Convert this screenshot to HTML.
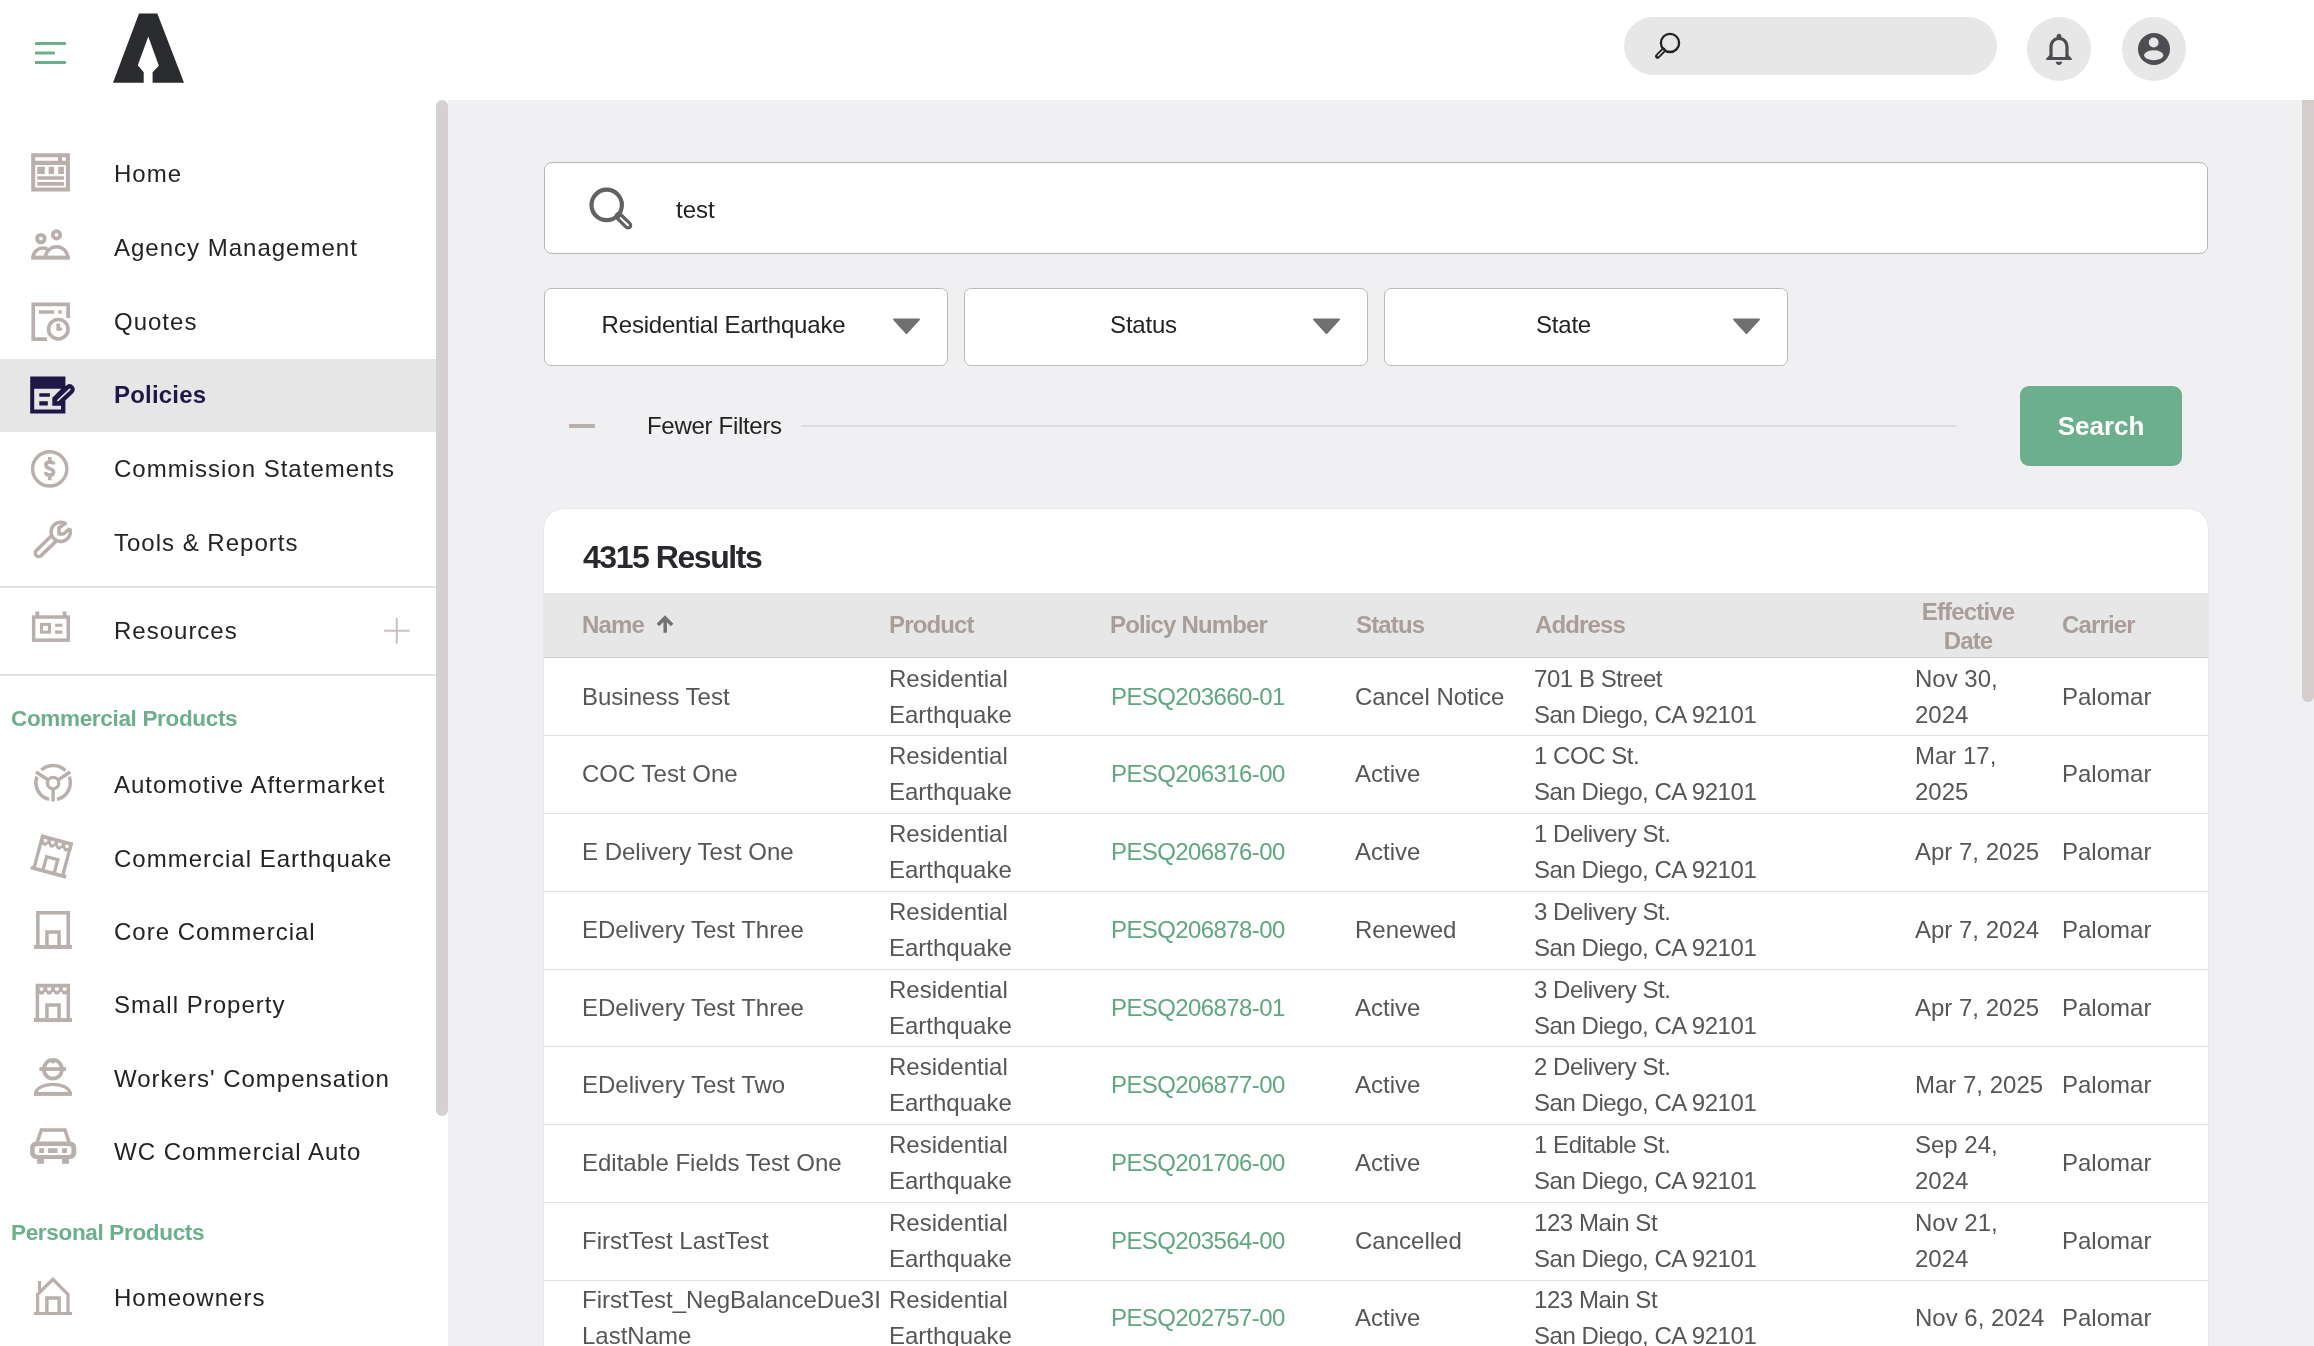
<!DOCTYPE html><html><head><meta charset="utf-8"><style>
*{box-sizing:border-box;margin:0;padding:0}
html,body{width:2314px;height:1346px;overflow:hidden;background:#fff;font-family:"Liberation Sans",sans-serif}
.t{position:absolute;white-space:nowrap;will-change:transform}
.b{position:absolute}
svg{position:absolute;left:0;top:0;overflow:visible}
</style></head><body><div class="b" style="left:448px;top:100px;width:1866px;height:1246px;background:#f0f0f3"></div><div class="b" style="left:0;top:358.8px;width:436px;height:72.8px;background:#e6e6e6"></div><div class="b" style="left:0;top:585.7px;width:436px;height:2px;background:#e3e3e7"></div><div class="b" style="left:0;top:673.8px;width:436px;height:2px;background:#e3e3e7"></div><div class="b" style="left:436px;top:100px;width:12px;height:1015.7px;border-radius:6px;background:#d6d1d0"></div><div class="b" style="left:2302px;top:100px;width:12px;height:601.7px;border-radius:0 0 6px 6px;background:#d3cdcc"></div><div class="b" style="left:1624px;top:17px;width:373px;height:58px;border-radius:29px;background:#e7e7e7"></div><div class="b" style="left:2027px;top:17px;width:64px;height:64px;border-radius:50%;background:#e7e7e7"></div><div class="b" style="left:2122px;top:17px;width:64px;height:64px;border-radius:50%;background:#e7e7e7"></div><div class="t" style="left:113.5px;top:156.38px;font-size:24px;line-height:36px;font-weight:400;color:#222326;letter-spacing:1px;">Home</div><div class="t" style="left:113.5px;top:229.68px;font-size:24px;line-height:36px;font-weight:400;color:#222326;letter-spacing:1px;">Agency Management</div><div class="t" style="left:113.5px;top:304.08px;font-size:24px;line-height:36px;font-weight:400;color:#222326;letter-spacing:1px;">Quotes</div><div class="t" style="left:113.5px;top:451.28px;font-size:24px;line-height:36px;font-weight:400;color:#222326;letter-spacing:1px;">Commission Statements</div><div class="t" style="left:113.5px;top:524.98px;font-size:24px;line-height:36px;font-weight:400;color:#222326;letter-spacing:1px;">Tools &amp; Reports</div><div class="t" style="left:113.5px;top:612.88px;font-size:24px;line-height:36px;font-weight:400;color:#222326;letter-spacing:1px;">Resources</div><div class="t" style="left:113.5px;top:766.68px;font-size:24px;line-height:36px;font-weight:400;color:#222326;letter-spacing:1px;">Automotive Aftermarket</div><div class="t" style="left:113.5px;top:840.58px;font-size:24px;line-height:36px;font-weight:400;color:#222326;letter-spacing:1px;">Commercial Earthquake</div><div class="t" style="left:113.5px;top:913.58px;font-size:24px;line-height:36px;font-weight:400;color:#222326;letter-spacing:1px;">Core Commercial</div><div class="t" style="left:113.5px;top:987.28px;font-size:24px;line-height:36px;font-weight:400;color:#222326;letter-spacing:1px;">Small Property</div><div class="t" style="left:113.5px;top:1061.38px;font-size:24px;line-height:36px;font-weight:400;color:#222326;letter-spacing:1px;">Workers' Compensation</div><div class="t" style="left:113.5px;top:1134.48px;font-size:24px;line-height:36px;font-weight:400;color:#222326;letter-spacing:1px;">WC Commercial Auto</div><div class="t" style="left:113.5px;top:1280.48px;font-size:24px;line-height:36px;font-weight:400;color:#222326;letter-spacing:1px;">Homeowners</div><div class="t" style="left:113.5px;top:377.28px;font-size:24px;line-height:36px;font-weight:700;color:#1f1746;letter-spacing:0.2px;">Policies</div><div class="t" style="left:11px;top:701.80px;font-size:22.5px;line-height:34px;font-weight:700;color:#6caf8c;letter-spacing:-0.33px;">Commercial Products</div><div class="t" style="left:11px;top:1215.50px;font-size:22.5px;line-height:34px;font-weight:700;color:#6caf8c;letter-spacing:-0.33px;">Personal Products</div><div class="b" style="left:544px;top:162px;width:1664px;height:92px;border:1.5px solid #bcb2b0;border-radius:8px;background:#fff"></div><div class="t" style="left:675.5px;top:191.58px;font-size:24px;line-height:36px;font-weight:400;color:#222;letter-spacing:0px;">test</div><div class="b" style="left:544px;top:288px;width:404px;height:78px;border:1.5px solid #c3b9b7;border-radius:7px;background:#fff"></div><div class="t" style="left:544px;top:306.7px;width:359px;text-align:center;font-size:24px;line-height:36px;color:#222;letter-spacing:-0.2px">Residential Earthquake</div><div class="b" style="left:964px;top:288px;width:404px;height:78px;border:1.5px solid #c3b9b7;border-radius:7px;background:#fff"></div><div class="t" style="left:964px;top:306.7px;width:359px;text-align:center;font-size:24px;line-height:36px;color:#222;letter-spacing:-0.2px">Status</div><div class="b" style="left:1384px;top:288px;width:404px;height:78px;border:1.5px solid #c3b9b7;border-radius:7px;background:#fff"></div><div class="t" style="left:1384px;top:306.7px;width:359px;text-align:center;font-size:24px;line-height:36px;color:#222;letter-spacing:-0.2px">State</div><div class="b" style="left:569px;top:423.5px;width:26px;height:4.2px;background:#b8aeac;border-radius:1px"></div><div class="t" style="left:647px;top:407.68px;font-size:24px;line-height:36px;font-weight:400;color:#222;letter-spacing:-0.3px;">Fewer Filters</div><div class="b" style="left:800.5px;top:424.6px;width:1155.5px;height:2px;background:#dcdce0"></div><div class="b" style="left:2020px;top:386px;width:162px;height:80px;border-radius:9px;background:#6caf8c"></div><div class="t" style="left:2020px;top:406.6px;width:162px;text-align:center;font-size:26px;line-height:39px;font-weight:700;color:#fff;letter-spacing:0px">Search</div><div class="b" style="left:544px;top:509px;width:1664px;height:900px;border-radius:20px;background:#fff;box-shadow:0 0 2px rgba(0,0,0,0.10)"></div><div class="t" style="left:582.5px;top:533.01px;font-size:32px;line-height:48px;font-weight:700;color:#28292c;letter-spacing:-1.45px;">4315 Results</div><div class="b" style="left:544px;top:593px;width:1664px;height:65px;background:#e7e7e7;border-bottom:1px solid #cbcbcb"></div><div class="t" style="left:581.5px;top:607.28px;font-size:24px;line-height:36px;font-weight:700;color:#a99d9a;letter-spacing:-0.85px;">Name</div><div class="t" style="left:889px;top:607.28px;font-size:24px;line-height:36px;font-weight:700;color:#a99d9a;letter-spacing:-0.85px;">Product</div><div class="t" style="left:1109.5px;top:607.28px;font-size:24px;line-height:36px;font-weight:700;color:#a99d9a;letter-spacing:-0.85px;">Policy Number</div><div class="t" style="left:1355.5px;top:607.28px;font-size:24px;line-height:36px;font-weight:700;color:#a99d9a;letter-spacing:-0.85px;">Status</div><div class="t" style="left:1534.5px;top:607.28px;font-size:24px;line-height:36px;font-weight:700;color:#a99d9a;letter-spacing:-0.85px;">Address</div><div class="t" style="left:2062px;top:607.28px;font-size:24px;line-height:36px;font-weight:700;color:#a99d9a;letter-spacing:-0.85px;">Carrier</div><div class="t" style="left:1900px;top:597px;width:136px;text-align:center;font-size:24px;line-height:29px;font-weight:700;color:#a99d9a;letter-spacing:-0.85px">Effective<br>Date</div><div class="t" style="left:582px;top:678.55px;font-size:24px;line-height:36px;color:#545658;letter-spacing:0px">Business Test</div><div class="t" style="left:889px;top:660.55px;font-size:24px;line-height:36px;color:#545658;letter-spacing:0px">Residential<br>Earthquake</div><div class="t" style="left:1110.6px;top:678.55px;font-size:24px;line-height:36px;color:#5fa77f;letter-spacing:-0.6px">PESQ203660-01</div><div class="t" style="left:1355.3px;top:678.55px;font-size:24px;line-height:36px;color:#545658;letter-spacing:0px">Cancel Notice</div><div class="t" style="left:1534.3px;top:660.55px;font-size:24px;line-height:36px;color:#545658;letter-spacing:-0.45px">701 B Street<br>San Diego, CA 92101</div><div class="t" style="left:1915.2px;top:660.55px;font-size:24px;line-height:36px;color:#545658;letter-spacing:0px">Nov 30,<br>2024</div><div class="t" style="left:2061.8px;top:678.55px;font-size:24px;line-height:36px;color:#545658;letter-spacing:0px">Palomar</div><div class="b" style="left:544px;top:735.00px;width:1664px;height:1px;background:#e0e0e0"></div><div class="t" style="left:582px;top:756.29px;font-size:24px;line-height:36px;color:#545658;letter-spacing:0px">COC Test One</div><div class="t" style="left:889px;top:738.29px;font-size:24px;line-height:36px;color:#545658;letter-spacing:0px">Residential<br>Earthquake</div><div class="t" style="left:1110.6px;top:756.29px;font-size:24px;line-height:36px;color:#5fa77f;letter-spacing:-0.6px">PESQ206316-00</div><div class="t" style="left:1355.3px;top:756.29px;font-size:24px;line-height:36px;color:#545658;letter-spacing:0px">Active</div><div class="t" style="left:1534.3px;top:738.29px;font-size:24px;line-height:36px;color:#545658;letter-spacing:-0.45px">1 COC St.<br>San Diego, CA 92101</div><div class="t" style="left:1915.2px;top:738.29px;font-size:24px;line-height:36px;color:#545658;letter-spacing:0px">Mar 17,<br>2025</div><div class="t" style="left:2061.8px;top:756.29px;font-size:24px;line-height:36px;color:#545658;letter-spacing:0px">Palomar</div><div class="b" style="left:544px;top:812.84px;width:1664px;height:1px;background:#e0e0e0"></div><div class="t" style="left:582px;top:834.03px;font-size:24px;line-height:36px;color:#545658;letter-spacing:0px">E Delivery Test One</div><div class="t" style="left:889px;top:816.03px;font-size:24px;line-height:36px;color:#545658;letter-spacing:0px">Residential<br>Earthquake</div><div class="t" style="left:1110.6px;top:834.03px;font-size:24px;line-height:36px;color:#5fa77f;letter-spacing:-0.6px">PESQ206876-00</div><div class="t" style="left:1355.3px;top:834.03px;font-size:24px;line-height:36px;color:#545658;letter-spacing:0px">Active</div><div class="t" style="left:1534.3px;top:816.03px;font-size:24px;line-height:36px;color:#545658;letter-spacing:-0.45px">1 Delivery St.<br>San Diego, CA 92101</div><div class="t" style="left:1915.2px;top:834.03px;font-size:24px;line-height:36px;color:#545658;letter-spacing:0px">Apr 7, 2025</div><div class="t" style="left:2061.8px;top:834.03px;font-size:24px;line-height:36px;color:#545658;letter-spacing:0px">Palomar</div><div class="b" style="left:544px;top:890.68px;width:1664px;height:1px;background:#e0e0e0"></div><div class="t" style="left:582px;top:911.77px;font-size:24px;line-height:36px;color:#545658;letter-spacing:0px">EDelivery Test Three</div><div class="t" style="left:889px;top:893.77px;font-size:24px;line-height:36px;color:#545658;letter-spacing:0px">Residential<br>Earthquake</div><div class="t" style="left:1110.6px;top:911.77px;font-size:24px;line-height:36px;color:#5fa77f;letter-spacing:-0.6px">PESQ206878-00</div><div class="t" style="left:1355.3px;top:911.77px;font-size:24px;line-height:36px;color:#545658;letter-spacing:0px">Renewed</div><div class="t" style="left:1534.3px;top:893.77px;font-size:24px;line-height:36px;color:#545658;letter-spacing:-0.45px">3 Delivery St.<br>San Diego, CA 92101</div><div class="t" style="left:1915.2px;top:911.77px;font-size:24px;line-height:36px;color:#545658;letter-spacing:0px">Apr 7, 2024</div><div class="t" style="left:2061.8px;top:911.77px;font-size:24px;line-height:36px;color:#545658;letter-spacing:0px">Palomar</div><div class="b" style="left:544px;top:968.52px;width:1664px;height:1px;background:#e0e0e0"></div><div class="t" style="left:582px;top:989.51px;font-size:24px;line-height:36px;color:#545658;letter-spacing:0px">EDelivery Test Three</div><div class="t" style="left:889px;top:971.51px;font-size:24px;line-height:36px;color:#545658;letter-spacing:0px">Residential<br>Earthquake</div><div class="t" style="left:1110.6px;top:989.51px;font-size:24px;line-height:36px;color:#5fa77f;letter-spacing:-0.6px">PESQ206878-01</div><div class="t" style="left:1355.3px;top:989.51px;font-size:24px;line-height:36px;color:#545658;letter-spacing:0px">Active</div><div class="t" style="left:1534.3px;top:971.51px;font-size:24px;line-height:36px;color:#545658;letter-spacing:-0.45px">3 Delivery St.<br>San Diego, CA 92101</div><div class="t" style="left:1915.2px;top:989.51px;font-size:24px;line-height:36px;color:#545658;letter-spacing:0px">Apr 7, 2025</div><div class="t" style="left:2061.8px;top:989.51px;font-size:24px;line-height:36px;color:#545658;letter-spacing:0px">Palomar</div><div class="b" style="left:544px;top:1046.36px;width:1664px;height:1px;background:#e0e0e0"></div><div class="t" style="left:582px;top:1067.25px;font-size:24px;line-height:36px;color:#545658;letter-spacing:0px">EDelivery Test Two</div><div class="t" style="left:889px;top:1049.25px;font-size:24px;line-height:36px;color:#545658;letter-spacing:0px">Residential<br>Earthquake</div><div class="t" style="left:1110.6px;top:1067.25px;font-size:24px;line-height:36px;color:#5fa77f;letter-spacing:-0.6px">PESQ206877-00</div><div class="t" style="left:1355.3px;top:1067.25px;font-size:24px;line-height:36px;color:#545658;letter-spacing:0px">Active</div><div class="t" style="left:1534.3px;top:1049.25px;font-size:24px;line-height:36px;color:#545658;letter-spacing:-0.45px">2 Delivery St.<br>San Diego, CA 92101</div><div class="t" style="left:1915.2px;top:1067.25px;font-size:24px;line-height:36px;color:#545658;letter-spacing:0px">Mar 7, 2025</div><div class="t" style="left:2061.8px;top:1067.25px;font-size:24px;line-height:36px;color:#545658;letter-spacing:0px">Palomar</div><div class="b" style="left:544px;top:1124.20px;width:1664px;height:1px;background:#e0e0e0"></div><div class="t" style="left:582px;top:1144.99px;font-size:24px;line-height:36px;color:#545658;letter-spacing:0px">Editable Fields Test One</div><div class="t" style="left:889px;top:1126.99px;font-size:24px;line-height:36px;color:#545658;letter-spacing:0px">Residential<br>Earthquake</div><div class="t" style="left:1110.6px;top:1144.99px;font-size:24px;line-height:36px;color:#5fa77f;letter-spacing:-0.6px">PESQ201706-00</div><div class="t" style="left:1355.3px;top:1144.99px;font-size:24px;line-height:36px;color:#545658;letter-spacing:0px">Active</div><div class="t" style="left:1534.3px;top:1126.99px;font-size:24px;line-height:36px;color:#545658;letter-spacing:-0.45px">1 Editable St.<br>San Diego, CA 92101</div><div class="t" style="left:1915.2px;top:1126.99px;font-size:24px;line-height:36px;color:#545658;letter-spacing:0px">Sep 24,<br>2024</div><div class="t" style="left:2061.8px;top:1144.99px;font-size:24px;line-height:36px;color:#545658;letter-spacing:0px">Palomar</div><div class="b" style="left:544px;top:1202.04px;width:1664px;height:1px;background:#e0e0e0"></div><div class="t" style="left:582px;top:1222.73px;font-size:24px;line-height:36px;color:#545658;letter-spacing:0px">FirstTest LastTest</div><div class="t" style="left:889px;top:1204.73px;font-size:24px;line-height:36px;color:#545658;letter-spacing:0px">Residential<br>Earthquake</div><div class="t" style="left:1110.6px;top:1222.73px;font-size:24px;line-height:36px;color:#5fa77f;letter-spacing:-0.6px">PESQ203564-00</div><div class="t" style="left:1355.3px;top:1222.73px;font-size:24px;line-height:36px;color:#545658;letter-spacing:0px">Cancelled</div><div class="t" style="left:1534.3px;top:1204.73px;font-size:24px;line-height:36px;color:#545658;letter-spacing:-0.45px">123 Main St<br>San Diego, CA 92101</div><div class="t" style="left:1915.2px;top:1204.73px;font-size:24px;line-height:36px;color:#545658;letter-spacing:0px">Nov 21,<br>2024</div><div class="t" style="left:2061.8px;top:1222.73px;font-size:24px;line-height:36px;color:#545658;letter-spacing:0px">Palomar</div><div class="b" style="left:544px;top:1279.88px;width:1664px;height:1px;background:#e0e0e0"></div><div class="t" style="left:582px;top:1282.47px;font-size:24px;line-height:36px;color:#545658;letter-spacing:0px">FirstTest_NegBalanceDue3I<br>LastName</div><div class="t" style="left:889px;top:1282.47px;font-size:24px;line-height:36px;color:#545658;letter-spacing:0px">Residential<br>Earthquake</div><div class="t" style="left:1110.6px;top:1300.47px;font-size:24px;line-height:36px;color:#5fa77f;letter-spacing:-0.6px">PESQ202757-00</div><div class="t" style="left:1355.3px;top:1300.47px;font-size:24px;line-height:36px;color:#545658;letter-spacing:0px">Active</div><div class="t" style="left:1534.3px;top:1282.47px;font-size:24px;line-height:36px;color:#545658;letter-spacing:-0.45px">123 Main St<br>San Diego, CA 92101</div><div class="t" style="left:1915.2px;top:1300.47px;font-size:24px;line-height:36px;color:#545658;letter-spacing:0px">Nov 6, 2024</div><div class="t" style="left:2061.8px;top:1300.47px;font-size:24px;line-height:36px;color:#545658;letter-spacing:0px">Palomar</div><svg width="2314" height="1346" viewBox="0 0 2314 1346"><path fill="#6caf8c" d="M35 42H64.8A1.5 1.5 0 0 1 64.8 45H35Z M35 51.6H53.6A1.5 1.5 0 0 1 53.6 54.6H35Z M35 61.1H64.8A1.5 1.5 0 0 1 64.8 64.1H35Z"/><path fill="#2a2b2e" d="M139 13.6H157.3L184 82.8H152.6V72.3L158.8 65.7L148.3 36.6L137.8 65.3L143.7 72.3V82.8H113Z"/><g fill="none" stroke="#222" stroke-width="2.3"><circle cx="1670" cy="42.9" r="9.1"/></g><path d="M1663.5 50.2L1657.5 56.2" stroke="#222" stroke-width="5" stroke-linecap="round"/><path d="M1663 50.7L1658 55.7" stroke="#e7e7e7" stroke-width="1.3" stroke-linecap="round"/><g transform="translate(2039.8,29.7) scale(1.6)"><path fill="#4d4e51" d="M12 22c1.1 0 2-.9 2-2h-4c0 1.1.89 2 2 2zm6-6v-5c0-3.07-1.64-5.64-4.5-6.32V4c0-.83-.67-1.5-1.5-1.5s-1.5.67-1.5 1.5v.68C7.63 5.36 6 7.92 6 11v5l-2 2v1h16v-1l-2-2zm-2 1H8v-6c0-2.48 1.51-4.5 4-4.5s4 2.02 4 4.5v6z"/></g><circle cx="2154" cy="49" r="16" fill="#4d4e51"/><circle cx="2153.7" cy="42.5" r="4.9" fill="#e7e7e7"/><ellipse cx="2153.7" cy="55.3" rx="9.6" ry="5" fill="#e7e7e7"/><path fill="#b9afac" fill-rule="evenodd" d="M31.2 153.3H69.9V191.5H31.2Z M35.2 157.2H58V160.8H35.2Z M62 157.2H65.9V160.8H62Z M35.2 165H65.9V187.5H35.2Z"/><path fill="#b9afac" d="M37.2 166.8h7.6v7.3h-7.6z M48.6 166.8h5.5v7.3h-5.5z M58.2 166.8h5.7v7.3h-5.7z M37.2 176.2h26.7v3.5h-26.7z M37.2 182.1h26.7v3.7h-26.7z"/><g fill="none" stroke="#b9afac"><circle cx="40.9" cy="238.6" r="3.75" stroke-width="3.9"/><circle cx="56.5" cy="234.9" r="3.7" stroke-width="3.8"/><path stroke-width="3.5" d="M33.1 258A9.8 9.8 0 0 1 47.5 249.3"/><path stroke-width="3.5" d="M45.25 258A11.3 11.3 0 0 1 67.85 258"/></g><rect x="31.2" y="255.6" width="38.6" height="4.1" fill="#b9afac"/><path fill="none" stroke="#b9afac" stroke-width="3.7" d="M47 339.15H33.25V304.35H68.15V318"/><path fill="#b9afac" d="M39 310.3h15.1v3.4h-15.1z M58.3 310.3h3.5v3.4h-3.5z M56.4 323.6h3.7v7.2h-3.7z M56.4 327.4h5.5v3.4h-5.5z"/><circle cx="58.3" cy="329.2" r="9.75" fill="none" stroke="#b9afac" stroke-width="3.6"/><path fill="#1f1746" fill-rule="evenodd" d="M30.2 376.6H65.4V385.9L66.6 385.2A5.1 5.1 0 0 1 73.2 392.9L65.4 400.6V413.5H30.2Z M34.2 388.7H61.3L52.3 397.8V405.7H61V409.4H34.2Z"/><path fill="#1f1746" d="M39.3 393.2h10.6v3.6h-10.6z M39.3 401.3h8.5v4.2h-8.5z"/><path d="M57.9 400.5L69.8 389.3" stroke="#e6e6e6" stroke-width="1.7" stroke-linecap="round"/><circle cx="49.7" cy="468.9" r="17.1" fill="none" stroke="#b9afac" stroke-width="3.4"/><path fill="none" stroke="#b9afac" stroke-width="3.6" d="M53.6 464.6C53.6 462.9 51.9 462.1 49.7 462.1C47.4 462.1 45.9 463.3 45.9 465.2C45.9 467.3 47.8 468 49.7 468.6C52 469.3 53.6 470.2 53.6 472.2C53.6 474.1 51.9 475.1 49.7 475.1C47.4 475.1 45.7 474 45.6 472.1M49.8 457V462.5M49.8 474.8V480.2"/><path fill="none" stroke="#b9afac" stroke-width="3.5" stroke-linejoin="round" d="M51.82 535.59L36.27 550.58A3.5 3.5 0 0 0 41.13 555.62L56.68 540.63"/><path fill="none" stroke="#b9afac" stroke-width="3.5" stroke-linejoin="round" d="M69.66 528.46A9.6 9.6 0 1 1 65.35 523.5L59 527.8V534H63.6L69.66 528.46"/><rect x="33.65" y="617.05" width="34.6" height="23.1" fill="none" stroke="#b9afac" stroke-width="3.5"/><path fill="#b9afac" d="M35.4 611.5h3.8v5h-3.8z M62.7 611.5h3.8v5h-3.8z M55.1 623.8h7.3v2.9h-7.3z M55.1 630.5h7.3v3.2h-7.3z"/><rect x="41.5" y="624.4" width="8" height="7.8" fill="none" stroke="#b9afac" stroke-width="3"/><path d="M384 630.8H409.6M396.8 618V643.6" stroke="#c9c1bf" stroke-width="2"/><path fill="none" stroke="#b9afac" stroke-width="3.5" d="M49.23 799.36A17.2 17.2 0 0 1 36.94 776.72M41.37 770.02A17.2 17.2 0 0 1 65.47 770.65M69.26 776.72A17.2 17.2 0 0 1 56.97 799.36"/><circle cx="53.1" cy="783.1" r="5.7" fill="none" stroke="#b9afac" stroke-width="3.3"/><path stroke="#b9afac" stroke-width="3.5" d="M48.3 780L36 772M57.9 780L70.2 772M53.1 788.8V801.5"/><g transform="translate(52.7,856.4) rotate(15) scale(0.96) translate(-53.05,-1003)"><path fill="none" stroke="#b9afac" stroke-width="3.5" d="M37.4 1019V985.6H68.3V1019"/><rect x="34" y="1018.1" width="38" height="3.9" fill="#b9afac"/><path fill="none" stroke="#b9afac" stroke-width="3.5" d="M46.95 1019V1004.95H59.05V1019"/><rect x="36.1" y="984" width="33.9" height="8" fill="#b9afac"/><circle cx="41.5" cy="991.4" r="3.1" fill="#b9afac"/><circle cx="49.2" cy="991.4" r="3.1" fill="#b9afac"/><circle cx="56.9" cy="991.4" r="3.1" fill="#b9afac"/><circle cx="64.7" cy="991.4" r="3.1" fill="#b9afac"/><path fill="#fff" d="M39.6 987.5H43.4V989A1.9 1.9 0 0 1 39.6 989Z"/><path fill="#fff" d="M47.300000000000004 987.5H51.1V989A1.9 1.9 0 0 1 47.300000000000004 989Z"/><path fill="#fff" d="M55.0 987.5H58.8V989A1.9 1.9 0 0 1 55.0 989Z"/><path fill="#fff" d="M62.800000000000004 987.5H66.60000000000001V989A1.9 1.9 0 0 1 62.800000000000004 989Z"/></g><g transform="translate(0,0)"><path fill="none" stroke="#b9afac" stroke-width="3.6" d="M37.85 946V912.8H68.25V946"/><rect x="34" y="945" width="38" height="3.9" fill="#b9afac"/><path fill="none" stroke="#b9afac" stroke-width="3.5" d="M46.95 946V932H59.05V946"/></g><path fill="none" stroke="#b9afac" stroke-width="3.5" d="M37.4 1019V985.6H68.3V1019"/><rect x="34" y="1018.1" width="38" height="3.9" fill="#b9afac"/><path fill="none" stroke="#b9afac" stroke-width="3.5" d="M46.95 1019V1004.95H59.05V1019"/><rect x="36.1" y="984" width="33.9" height="8" fill="#b9afac"/><circle cx="41.5" cy="991.4" r="3.1" fill="#b9afac"/><circle cx="49.2" cy="991.4" r="3.1" fill="#b9afac"/><circle cx="56.9" cy="991.4" r="3.1" fill="#b9afac"/><circle cx="64.7" cy="991.4" r="3.1" fill="#b9afac"/><path fill="#fff" d="M39.6 987.5H43.4V989A1.9 1.9 0 0 1 39.6 989Z"/><path fill="#fff" d="M47.300000000000004 987.5H51.1V989A1.9 1.9 0 0 1 47.300000000000004 989Z"/><path fill="#fff" d="M55.0 987.5H58.8V989A1.9 1.9 0 0 1 55.0 989Z"/><path fill="#fff" d="M62.800000000000004 987.5H66.60000000000001V989A1.9 1.9 0 0 1 62.800000000000004 989Z"/><ellipse cx="52.9" cy="1069.3" rx="9.1" ry="9.35" fill="none" stroke="#b9afac" stroke-width="3.7"/><rect x="39.4" y="1067.2" width="26.7" height="3.7" fill="#b9afac"/><rect x="51.1" y="1060.5" width="3.8" height="2.8" fill="#b9afac"/><path fill="none" stroke="#b9afac" stroke-width="3.2" d="M35.5 1094.3A17.4 10 0 0 1 70.3 1094.3"/><rect x="33.9" y="1091.9" width="38" height="4" fill="#b9afac"/><path fill="none" stroke="#b9afac" stroke-width="3.5" d="M37.3 1142L41.3 1130H65L69 1142"/><path fill="#b9afac" fill-rule="evenodd" d="M36.1 1141.5H70.2A6 6 0 0 1 76.2 1147.5V1153.1A6 6 0 0 1 70.2 1159.1H36.1A6 6 0 0 1 30.1 1153.1V1147.5A6 6 0 0 1 36.1 1141.5Z M37.6 1146.1H68.5A3 3 0 0 1 71.5 1149.1V1152A3 3 0 0 1 68.5 1155H37.6A3 3 0 0 1 34.6 1152V1149.1A3 3 0 0 1 37.6 1146.1Z"/><path fill="#b9afac" d="M39.2 1148.2h4.7v4.7h-4.7z M48.1 1148.2h9.4v4.7h-9.4z M62.1 1148.2h4.9v4.7h-4.9z M37.2 1158h6.7v5.8h-6.7z M62.1 1158h6.8v5.8h-6.8z"/><path fill="none" stroke="#b9afac" stroke-width="3.3" d="M37.6 1313V1294.4L52.9 1279.4L68 1294.4V1313"/><path fill="#b9afac" d="M37.9 1281h3.2v10h-3.2z M33.9 1311.9h38.2v3.1h-38.2z"/><path fill="none" stroke="#b9afac" stroke-width="3.4" d="M46.9 1313V1298H59.1V1313"/><circle cx="606.7" cy="204.9" r="15.2" fill="none" stroke="#626262" stroke-width="4.2"/><path d="M618.8 216.3L628 225.3" stroke="#626262" stroke-width="8.6" stroke-linecap="round"/><path d="M620.6 218.1L628 225.3" stroke="#fff" stroke-width="2" stroke-linecap="round"/><path fill="#707070" stroke="#707070" stroke-width="2" stroke-linejoin="round" d="M894 319.4H919L906.5 333Z"/><path fill="#707070" stroke="#707070" stroke-width="2" stroke-linejoin="round" d="M1314 319.4H1339L1326.5 333Z"/><path fill="#707070" stroke="#707070" stroke-width="2" stroke-linejoin="round" d="M1734 319.4H1759L1746.5 333Z"/><path d="M665.2 632.8V618.8M657.9 624.9L665 617.8L672.1 624.9" fill="none" stroke="#727272" stroke-width="3.5"/></svg></body></html>
